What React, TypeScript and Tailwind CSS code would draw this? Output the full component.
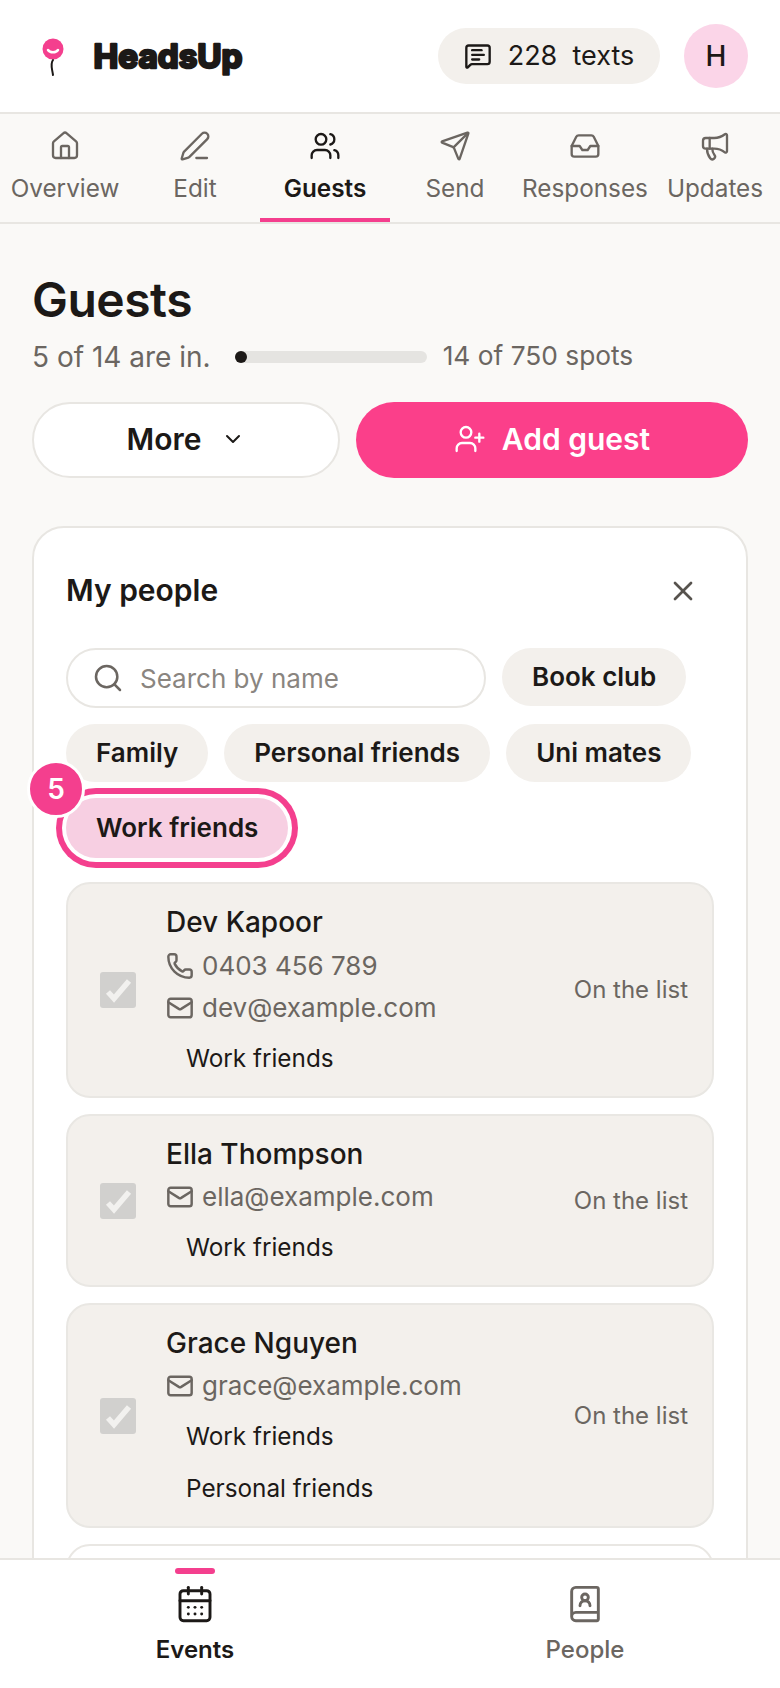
import { House, PenLine, Users, Send, Inbox, Megaphone, MessageSquareText, ChevronDown, UserPlus, X, Search, Phone, Mail, CalendarDays, BookUser } from "lucide-react";

const tabs = [
  { label: "Overview", Icon: House },
  { label: "Edit", Icon: PenLine },
  { label: "Guests", Icon: Users, active: true },
  { label: "Send", Icon: Send },
  { label: "Responses", Icon: Inbox },
  { label: "Updates", Icon: Megaphone },
];

const people = [
  { name: "Dev Kapoor", phone: "0403 456 789", email: "dev@example.com", tags: ["Work friends"] },
  { name: "Ella Thompson", email: "ella@example.com", tags: ["Work friends"] },
  { name: "Grace Nguyen", email: "grace@example.com", tags: ["Work friends", "Personal friends"] },
];

function Chip({ children }: { children: string }) {
  return (
    <button className="h-[58px] rounded-full bg-[#f3f0ec] px-[30px] pb-[2px] text-[26px] font-semibold text-[#1c1917]">{children}</button>
  );
}

function Person({ p }: { p: (typeof people)[number] }) {
  return (
    <div className="flex items-center rounded-[24px] border-2 border-[#e9e7e3] bg-[#f3f0ec] pl-[32px] pr-[24px]">
      <div className="mr-[30px] h-[36px] w-[36px] shrink-0 rounded-[3px] bg-[#d1d0ce]">
        <svg width="36" height="36" viewBox="0 0 36 36" aria-hidden="true">
          <path d="M8 20l6 6.5L29 9" fill="none" stroke="#f2f1ef" strokeWidth="5.5" />
        </svg>
      </div>
      <div className="min-w-0 flex-1 pb-[12px] pt-[20px]">
        <div className="text-[28px] font-medium leading-[36px] text-[#1c1917]">{p.name}</div>
        {p.phone && (
          <div className="mt-[7px] flex items-center gap-[8px] text-[26px] leading-[38px] text-[#6b6661]">
            <Phone size={28} strokeWidth={2.1} />
            {p.phone}
          </div>
        )}
        <div className={`${p.phone ? "mt-[4px]" : "mt-[6px]"} flex items-center gap-[8px] text-[26px] leading-[38px] text-[#6b6661]`}>
          <Mail size={28} strokeWidth={2.1} />
          {p.email}
        </div>
        <div className="mt-[5px] flex flex-col items-start">
          {p.tags.map((t) => (
            <span key={t} className="px-[20px] py-[6px] text-[24.3px] leading-[40px] text-[#1c1917]">{t}</span>
          ))}
        </div>
      </div>
      <div className="shrink-0 text-[24px] text-[#6b6661]">On the list</div>
    </div>
  );
}

export default function App() {
  return (
    <div className="flex h-[1688px] w-[780px] flex-col overflow-hidden bg-[#faf9f7] font-['Inter',sans-serif]">
      <header className="flex h-[114px] shrink-0 items-center justify-between border-b-2 border-[#e8e6e2] bg-white pl-[41px] pr-[32px]">
        <div className="flex items-center gap-[27px]">
          <svg width="24" height="40" viewBox="0 0 24 40" className="mt-[4px]" aria-hidden="true">
            <circle cx="12" cy="11" r="10.5" fill="#f43f8e" />
            <path d="M7 12c2 3 8 3 10 0" fill="none" stroke="#fff" strokeWidth="2.5" strokeLinecap="round" />
            <path d="M12 22c-3 4-1 8 0 15" fill="none" stroke="#1c1917" strokeWidth="2" strokeLinecap="round" />
          </svg>
          <svg width="154" height="44" viewBox="0 0 154 44" className="mt-[4px]" role="img" aria-label="HeadsUp">
            <text x="1.5" y="32" fontFamily="Inter" fontWeight="700" fontSize="33" textLength="149" lengthAdjust="spacingAndGlyphs" fill="#1c1917" stroke="#1c1917" strokeWidth="2.6" strokeLinejoin="round">HeadsUp</text>
          </svg>
        </div>
        <div className="flex items-center gap-[24px]">
          <div className="flex h-[56px] w-[222px] items-center justify-center gap-[16px] rounded-full bg-[#f3f0ec] text-[27px] text-[#1c1917]">
            <MessageSquareText size={28} strokeWidth={2} />
            <span className="whitespace-pre">228  texts</span>
          </div>
          <div className="flex h-[64px] w-[64px] items-center justify-center rounded-full bg-[#fbd5e8] text-[28px] font-medium text-[#1c1917]">H</div>
        </div>
      </header>

      <nav className="flex h-[110px] shrink-0 border-b-2 border-[#e8e6e2] bg-[#faf9f7]">
        {tabs.map(({ label, Icon, active }) => (
          <div key={label} className={`flex w-[130px] flex-col items-center border-b-4 pt-[16px] ${active ? "border-[#f43f8e] text-[#1c1917]" : "border-transparent text-[#6b6661]"}`}>
            <Icon size={32} strokeWidth={1.75} />
            <span className={`mt-[8px] whitespace-nowrap text-[24.3px] ${active ? "font-semibold" : ""}`}>{label}</span>
          </div>
        ))}
      </nav>

      <main className="min-h-0 flex-1 overflow-hidden px-[32px] pt-[47px]">
        <h1 className="text-[48px] font-semibold leading-[58px] tracking-[-0.5px] text-[#1c1917]">Guests</h1>
        <div className="mt-[7px] flex h-[41px] items-center text-[#6b6661]">
          <span className="mt-[2px] text-[28px] leading-[39px]">5 of 14 are in.</span>
          <div className="ml-[24px] h-[12px] w-[192px] rounded-full bg-[#e5e4e1]">
            <div className="h-[12px] w-[12px] rounded-full bg-[#1c1917]" />
          </div>
          <span className="-mt-[2px] ml-[16px] text-[26.3px] leading-[39px]">14 of 750 spots</span>
        </div>
        <div className="mt-[25px] flex gap-[16px]">
          <button className="flex h-[76px] w-[308px] items-center justify-center gap-[20px] rounded-full border-2 border-[#e8e6e2] bg-white pb-[2px] text-[30px] font-semibold text-[#1c1917]">
            More <ChevronDown size={24} strokeWidth={2} />
          </button>
          <button className="flex h-[76px] flex-1 items-center justify-center gap-[16px] rounded-full bg-[#fb3f8a] pb-[2px] text-[30px] font-semibold text-white">
            <UserPlus size={32} strokeWidth={1.75} /> Add guest
          </button>
        </div>

        <section className="mt-[48px] rounded-[32px] border-2 border-[#e8e6e2] bg-white px-[32px] pt-[40px]">
          <div className="flex items-center justify-between pr-[15px]">
            <h2 className="text-[30px] font-semibold text-[#1c1917]">My people</h2>
            <X size={32} strokeWidth={2} className="text-[#57534e]" />
          </div>
          <div className="mt-[35px] flex flex-wrap items-start gap-x-[16px] gap-y-[16px]">
            <div className="flex h-[60px] w-[420px] items-center gap-[16px] rounded-full border-2 border-[#e8e6e2] bg-white px-[24px] text-[26px] text-[#8a8580]">
              <Search size={32} strokeWidth={1.9} className="text-[#6b6661]" />
              Search by name
            </div>
            <Chip>Book club</Chip>
            <Chip>Family</Chip>
            <Chip>Personal friends</Chip>
            <Chip>Uni mates</Chip>
            <div className="relative">
              <button className="h-[60px] rounded-full bg-[#f7cfe2] px-[30px] pb-[2px] text-[26px] font-semibold text-[#1c1917] shadow-[0_0_0_4px_#ffffff,0_0_0_10px_#f43f8e]">Work friends</button>
              <span className="absolute -left-[39px] -top-[38px] flex h-[58px] w-[58px] items-center justify-center rounded-full border-[3px] border-white bg-[#f43f8e] text-[28px] font-semibold text-white">5</span>
            </div>
          </div>
          <div className="mt-[24px] flex flex-col gap-[16px]">
            {people.map((p) => (
              <Person key={p.name} p={p} />
            ))}
            <div className="h-[80px] rounded-t-[24px] border-2 border-[#e9e7e3]" />
          </div>
        </section>
      </main>

      <footer className="flex h-[130px] shrink-0 border-t-2 border-[#e8e6e2] bg-white">
        <div className="relative flex flex-1 flex-col items-center pt-[24px] text-[#1c1917]">
          <span className="absolute top-[8px] h-[6px] w-[40px] rounded-full bg-[#f43f8e]" />
          <CalendarDays size={40} strokeWidth={1.75} />
          <span className="mt-[8px] text-[24px] font-semibold">Events</span>
        </div>
        <div className="flex flex-1 flex-col items-center pt-[24px] text-[#6b6661]">
          <BookUser size={40} strokeWidth={1.75} />
          <span className="mt-[8px] text-[24px] font-medium">People</span>
        </div>
      </footer>
    </div>
  );
}
